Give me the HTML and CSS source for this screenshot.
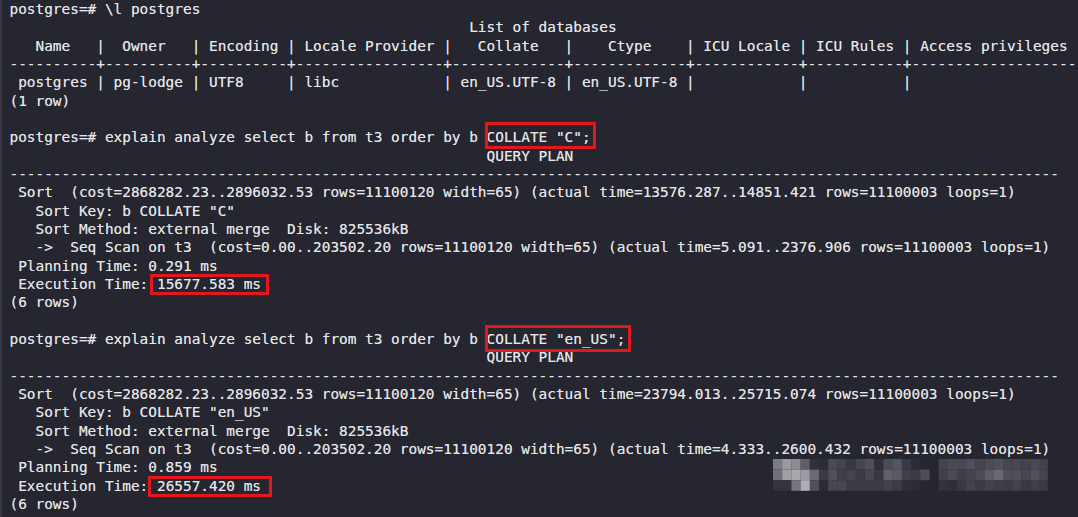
FILE: index.html
```html
<!DOCTYPE html>
<html>
<head>
<meta charset="utf-8">
<link rel="stylesheet" href="styles.css">
</head>
<body>
<div class="term">
<pre class="out">postgres=# \l postgres
                                                     List of databases
   Name   |  Owner   | Encoding | Locale Provider |   Collate   |    Ctype    | ICU Locale | ICU Rules | Access privileges 
----------+----------+----------+-----------------+-------------+-------------+------------+-----------+-------------------
 postgres | pg-lodge | UTF8     | libc            | en_US.UTF-8 | en_US.UTF-8 |            |           | 
(1 row)

postgres=# explain analyze select b from t3 order by b <span class="hl hl-q1">COLLATE "C";</span>
                                                       QUERY PLAN
-------------------------------------------------------------------------------------------------------------------------
 Sort  (cost=2868282.23..2896032.53 rows=11100120 width=65) (actual time=13576.287..14851.421 rows=11100003 loops=1)
   Sort Key: b COLLATE "C"
   Sort Method: external merge  Disk: 825536kB
   ->  Seq Scan on t3  (cost=0.00..203502.20 rows=11100120 width=65) (actual time=5.091..2376.906 rows=11100003 loops=1)
 Planning Time: 0.291 ms
 Execution Time: <span class="hl hl-t1">15677.583 ms</span>
(6 rows)

postgres=# explain analyze select b from t3 order by b <span class="hl hl-q2">COLLATE "en_US";</span>
                                                       QUERY PLAN
-------------------------------------------------------------------------------------------------------------------------
 Sort  (cost=2868282.23..2896032.53 rows=11100120 width=65) (actual time=23794.013..25715.074 rows=11100003 loops=1)
   Sort Key: b COLLATE "en_US"
   Sort Method: external merge  Disk: 825536kB
   ->  Seq Scan on t3  (cost=0.00..203502.20 rows=11100120 width=65) (actual time=4.333..2600.432 rows=11100003 loops=1)
 Planning Time: 0.859 ms
 Execution Time: <span class="hl hl-t2">26557.420 ms</span>
(6 rows)</pre>
<svg class="mark" width="280" height="32" viewBox="0 0 280 32" aria-hidden="true">
<g>
<rect x="0" y="0" width="9.3" height="10.6" fill="#7c7c84"/><rect x="0" y="10.6" width="9.3" height="10.6" fill="#707078"/><rect x="0" y="21.2" width="9.3" height="10.6" fill="#34343e"/>
<rect x="9.2" y="0" width="9.3" height="10.6" fill="#9a9aa0"/><rect x="9.2" y="10.6" width="9.3" height="10.6" fill="#a0a0a6"/><rect x="9.2" y="21.2" width="9.3" height="10.6" fill="#34343e"/>
<rect x="18.4" y="0" width="9.3" height="10.6" fill="#8c8c92"/><rect x="18.4" y="10.6" width="9.3" height="10.6" fill="#a8a8ae"/><rect x="18.4" y="21.2" width="9.3" height="10.6" fill="#76767e"/>
<rect x="27.6" y="0" width="9.3" height="10.6" fill="#5e5e66"/><rect x="27.6" y="10.6" width="9.3" height="10.6" fill="#9a9aa0"/><rect x="27.6" y="21.2" width="9.3" height="10.6" fill="#b0b0b4"/>
<rect x="36.8" y="0" width="9.3" height="10.6" fill="#30303a"/><rect x="36.8" y="10.6" width="9.3" height="10.6" fill="#6a6a72"/><rect x="36.8" y="21.2" width="9.3" height="10.6" fill="#505058"/>
<rect x="46" y="0" width="9.3" height="10.6" fill="#2c2c36"/><rect x="46" y="10.6" width="9.3" height="10.6" fill="#3a3a44"/><rect x="46" y="21.2" width="9.3" height="10.6" fill="#2c2c36"/>
<rect x="55.2" y="0" width="9.3" height="10.6" fill="#4a4a54"/><rect x="55.2" y="10.6" width="9.3" height="10.6" fill="#50505a"/><rect x="55.2" y="21.2" width="9.3" height="10.6" fill="#48484f"/>
<rect x="64.4" y="0" width="9.3" height="10.6" fill="#44444e"/><rect x="64.4" y="10.6" width="9.3" height="10.6" fill="#3e3e48"/><rect x="64.4" y="21.2" width="9.3" height="10.6" fill="#48484f"/>
<rect x="73.6" y="0" width="9.3" height="10.6" fill="#383842"/><rect x="73.6" y="10.6" width="9.3" height="10.6" fill="#44444e"/><rect x="73.6" y="21.2" width="9.3" height="10.6" fill="#3c3c46"/>
<rect x="82.8" y="0" width="9.3" height="10.6" fill="#454550"/><rect x="82.8" y="10.6" width="9.3" height="10.6" fill="#3a3a44"/><rect x="82.8" y="21.2" width="9.3" height="10.6" fill="#3c3c46"/>
<rect x="92" y="0" width="9.3" height="10.6" fill="#50505a"/><rect x="92" y="10.6" width="9.3" height="10.6" fill="#484852"/><rect x="92" y="21.2" width="9.3" height="10.6" fill="#3c3c46"/>
<rect x="101.2" y="0" width="9.3" height="10.6" fill="#30303a"/><rect x="101.2" y="10.6" width="9.3" height="10.6" fill="#383842"/><rect x="101.2" y="21.2" width="9.3" height="10.6" fill="#3c3c46"/>
<rect x="110.4" y="0" width="9.3" height="10.6" fill="#4c4c56"/><rect x="110.4" y="10.6" width="9.3" height="10.6" fill="#60606a"/><rect x="110.4" y="21.2" width="9.3" height="10.6" fill="#44444e"/>
<rect x="119.6" y="0" width="9.3" height="10.6" fill="#55555e"/><rect x="119.6" y="10.6" width="9.3" height="10.6" fill="#5a5a62"/><rect x="119.6" y="21.2" width="9.3" height="10.6" fill="#3c3c46"/>
<rect x="128.8" y="0" width="9.3" height="10.6" fill="#3a3a44"/><rect x="128.8" y="10.6" width="9.3" height="10.6" fill="#404049"/><rect x="128.8" y="21.2" width="9.3" height="10.6" fill="#30303a"/>
<rect x="138" y="0" width="9.3" height="10.6" fill="#2c2c36"/><rect x="138" y="10.6" width="9.3" height="10.6" fill="#3a3a44"/><rect x="138" y="21.2" width="9.3" height="10.6" fill="#2c2c36"/>
<rect x="147.2" y="10.6" width="9.3" height="10.6" fill="#4e4e56"/>
<rect x="165.6" y="0" width="9.3" height="10.6" fill="#44444e"/><rect x="165.6" y="10.6" width="9.3" height="10.6" fill="#404049"/><rect x="165.6" y="21.2" width="9.3" height="10.6" fill="#34343e"/>
<rect x="174.8" y="0" width="9.3" height="10.6" fill="#4a4a54"/><rect x="174.8" y="10.6" width="9.3" height="10.6" fill="#4a4a54"/><rect x="174.8" y="21.2" width="9.3" height="10.6" fill="#30303a"/>
<rect x="184" y="0" width="9.3" height="10.6" fill="#48484f"/><rect x="184" y="10.6" width="9.3" height="10.6" fill="#3e3e48"/><rect x="184" y="21.2" width="9.3" height="10.6" fill="#3a3a44"/>
<rect x="193.2" y="0" width="9.3" height="10.6" fill="#50505a"/><rect x="193.2" y="10.6" width="9.3" height="10.6" fill="#44444e"/><rect x="193.2" y="21.2" width="9.3" height="10.6" fill="#44444e"/>
<rect x="202.4" y="0" width="9.3" height="10.6" fill="#44444e"/><rect x="202.4" y="10.6" width="9.3" height="10.6" fill="#4c4c56"/><rect x="202.4" y="21.2" width="9.3" height="10.6" fill="#3c3c46"/>
<rect x="211.6" y="0" width="9.3" height="10.6" fill="#4c4c56"/><rect x="211.6" y="10.6" width="9.3" height="10.6" fill="#5c5c66"/><rect x="211.6" y="21.2" width="9.3" height="10.6" fill="#44444e"/>
<rect x="220.8" y="0" width="9.3" height="10.6" fill="#50505a"/><rect x="220.8" y="10.6" width="9.3" height="10.6" fill="#6a6a72"/><rect x="220.8" y="21.2" width="9.3" height="10.6" fill="#3e3e48"/>
<rect x="230" y="0" width="9.3" height="10.6" fill="#46464f"/><rect x="230" y="10.6" width="9.3" height="10.6" fill="#50505a"/><rect x="230" y="21.2" width="9.3" height="10.6" fill="#3c3c46"/>
<rect x="239.2" y="0" width="9.3" height="10.6" fill="#48484f"/><rect x="239.2" y="10.6" width="9.3" height="10.6" fill="#50505a"/><rect x="239.2" y="21.2" width="9.3" height="10.6" fill="#44444e"/>
<rect x="248.4" y="0" width="9.3" height="10.6" fill="#44444e"/><rect x="248.4" y="10.6" width="9.3" height="10.6" fill="#48484f"/><rect x="248.4" y="21.2" width="9.3" height="10.6" fill="#3a3a44"/>
<rect x="257.6" y="0" width="9.3" height="10.6" fill="#4a4a54"/><rect x="257.6" y="10.6" width="9.3" height="10.6" fill="#52525a"/><rect x="257.6" y="21.2" width="9.3" height="10.6" fill="#40404a"/>
<rect x="266.8" y="0" width="8" height="10.6" fill="#42424c"/><rect x="266.8" y="10.6" width="8" height="10.6" fill="#44444e"/><rect x="266.8" y="21.2" width="8" height="10.6" fill="#3a3a44"/>
</g>
</svg>
</div>
</body>
</html>
```
FILE: styles.css
```css
html, body {
  margin: 0;
  padding: 0;
  background: #25262f;
  overflow: hidden;
}

.term {
  position: relative;
  width: 1078px;
  height: 517px;
  box-sizing: border-box;
  border-left: 2px solid #373842;
  background: #25262f;
}

.out {
  margin: 0;
  padding: 0 0 0 7.5px;
  font-family: "DejaVu Sans Mono", "Liberation Mono", monospace;
  font-size: 14.42px;
  line-height: 18.33px;
  color: #e6e6e9;
  text-shadow: 0 0 0.4px rgba(230, 230, 233, 0.7);
  white-space: pre;
}

.hl {
  position: relative;
}

.hl::after {
  content: "";
  position: absolute;
  border: 3px solid #e3171c;
}

.hl-q1::after { left: -2px; right: -5px; top: -7px; bottom: -3.5px; }
.hl-q2::after { left: -2px; right: -6px; top: -6px; bottom: -5px; }
.hl-t1::after { left: -7px; right: -8px; top: -2px; bottom: -3.5px; }
.hl-t2::after { left: -9px; right: -11px; top: -1.5px; bottom: -3px; }

.mark {
  position: absolute;
  left: 771px;
  top: 459px;
}
```
